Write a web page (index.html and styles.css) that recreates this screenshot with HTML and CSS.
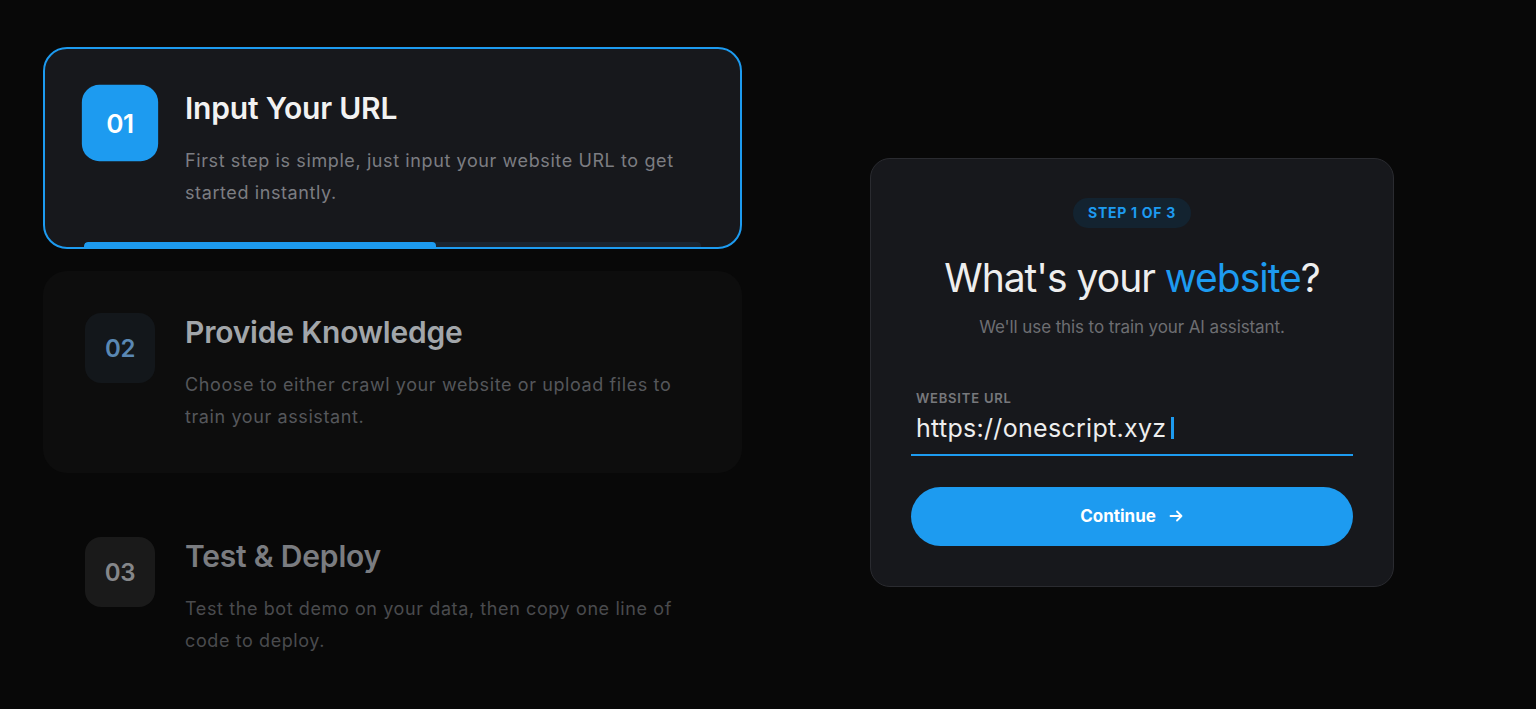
FILE: index.html
```html
<!DOCTYPE html>
<html lang="en">
<head>
<meta charset="utf-8">
<title>Steps</title>
<link rel="stylesheet" href="styles.css">
</head>
<body>
<main class="layout">
  <section class="steps">
    <article class="step step-active">
      <div class="badge badge-active">01</div>
      <div class="step-body">
        <h3 class="step-title">Input Your URL</h3>
        <p class="step-desc">First step is simple, just input your website URL to get started instantly.</p>
      </div>
      <div class="progress"><div class="progress-fill" style="width:57%"></div></div>
    </article>
    <article class="step step-next">
      <div class="badge badge-next">02</div>
      <div class="step-body">
        <h3 class="step-title title-next">Provide Knowledge</h3>
        <p class="step-desc desc-next">Choose to either crawl your website or upload files to train your assistant.</p>
      </div>
    </article>
    <article class="step step-idle">
      <div class="badge badge-idle">03</div>
      <div class="step-body">
        <h3 class="step-title title-idle">Test &amp; Deploy</h3>
        <p class="step-desc desc-idle">Test the bot demo on your data, then copy one line of code to deploy.</p>
      </div>
    </article>
  </section>

  <section class="panel">
    <div class="pill">STEP 1 OF 3</div>
    <h2 class="panel-title">What's your <span class="accent">website</span>?</h2>
    <p class="panel-sub">We'll use this to train your AI assistant.</p>
    <div class="field">
      <div class="field-label">WEBSITE URL</div>
      <div class="field-input"><span>https://onescript.xyz</span><span class="caret"></span></div>
    </div>
    <button class="btn">Continue
      <svg class="btn-icon" width="16" height="16" viewBox="0 0 16 16" fill="none" stroke="#fff" stroke-width="1.8" stroke-linecap="round" stroke-linejoin="round"><path d="M2.5 8h11M9 3.5 13.5 8 9 12.5"/></svg>
    </button>
  </section>
</main>
</body>
</html>
```
FILE: styles.css
```css
* { box-sizing: border-box; }
html, body { margin: 0; padding: 0; }
body {
  background: #080808;
  font-family: Inter, "Noto Sans", sans-serif;
  color: #eee;
  height: 709px;
  overflow: hidden;
}
.layout {
  display: flex;
  align-items: center;
  gap: 128px;
  padding: 47px 0 0 43px;
}
.steps {
  width: 699px;
  display: flex;
  flex-direction: column;
  gap: 22px;
}
.step {
  position: relative;
  display: flex;
  align-items: flex-start;
  gap: 30px;
  height: 202px;
  padding: 39px 40px;
  border: 2px solid transparent;
  border-radius: 24px;
  overflow: hidden;
}
.step-active {
  background: #17181c;
  border-color: #1d9bf0;
}
.step-next { background: #0d0d0d; }
.badge {
  flex: 0 0 70px;
  width: 70px;
  height: 70px;
  margin-top: 1px;
  border-radius: 16px;
  display: flex;
  align-items: center;
  justify-content: center;
  font-size: 24px;
  font-weight: 600;
  letter-spacing: -0.3px;
}
.badge-active {
  background: #1d9bf0;
  color: #fff;
  margin-top: 0;
  transform: scale(1.09);
}
.badge-next { background: #13171b; color: #5a88b4; }
.badge-idle { background: #1a1a1a; color: #85878a; }
.step-body { flex: 1; }
.step-title {
  margin: 2px 0 19px;
  font-size: 30px;
  line-height: 36px;
  font-weight: 600;
  letter-spacing: -0.2px;
  color: #f2f2f2;
}
.title-next { color: #a2a6aa; }
.title-idle { color: #7a7c80; }
.step-desc {
  margin: 0;
  font-size: 18px;
  line-height: 32px;
  color: #7c7d82;
  letter-spacing: 0.6px;
}
.desc-next { color: #55575b; }
.desc-idle { color: #4a4b4e; }
.progress {
  position: absolute;
  left: 39px;
  right: 39px;
  bottom: 0;
  height: 5px;
  background: #1b2530;
  border-radius: 4px 4px 0 0;
  overflow: hidden;
}
.progress-fill {
  height: 100%;
  background: #1d9bf0;
  border-radius: 4px 4px 0 0;
}
.panel {
  width: 524px;
  padding: 39px 40px 40px;
  background: #17181c;
  border: 1px solid #2a2b30;
  border-radius: 20px;
  display: flex;
  flex-direction: column;
  align-items: center;
}
.pill {
  height: 30px;
  padding: 0 15px;
  border-radius: 15px;
  background: #132330;
  color: #1d9bf0;
  font-size: 14px;
  font-weight: 700;
  letter-spacing: 0.7px;
  display: flex;
  align-items: center;
}
.panel-title {
  margin: 26px 0 0;
  font-size: 39px;
  line-height: 48px;
  font-weight: 400;
  letter-spacing: -1px;
  color: #eeeeee;
}
.accent { color: #1d9bf0; }
.panel-sub {
  margin: 13px 0 0;
  font-size: 17px;
  line-height: 24px;
  color: #6d6e72;
  letter-spacing: -0.1px;
}
.field {
  align-self: stretch;
  margin-top: 51px;
}
.field-label {
  padding-left: 5px;
  font-size: 13px;
  line-height: 16px;
  font-weight: 600;
  color: #77787c;
  letter-spacing: 0.8px;
}
.field-input {
  margin-top: 6px;
  padding: 0 5px 10px;
  border-bottom: 2px solid #1d9bf0;
  font-size: 25px;
  line-height: 32px;
  color: #eeeeee;
  display: flex;
  align-items: center;
  letter-spacing: 0.3px;
}
.caret {
  display: inline-block;
  width: 3px;
  height: 22px;
  margin-left: 5px;
  background: #1d9bf0;
}
.btn {
  align-self: stretch;
  margin-top: 31px;
  height: 59px;
  border: 0;
  border-radius: 30px;
  background: #1d9bf0;
  color: #fff;
  font-family: inherit;
  font-size: 17px;
  font-weight: 700;
  letter-spacing: 0;
  display: flex;
  align-items: center;
  justify-content: center;
  gap: 12px;
}
.btn-icon { display: block; }
```
